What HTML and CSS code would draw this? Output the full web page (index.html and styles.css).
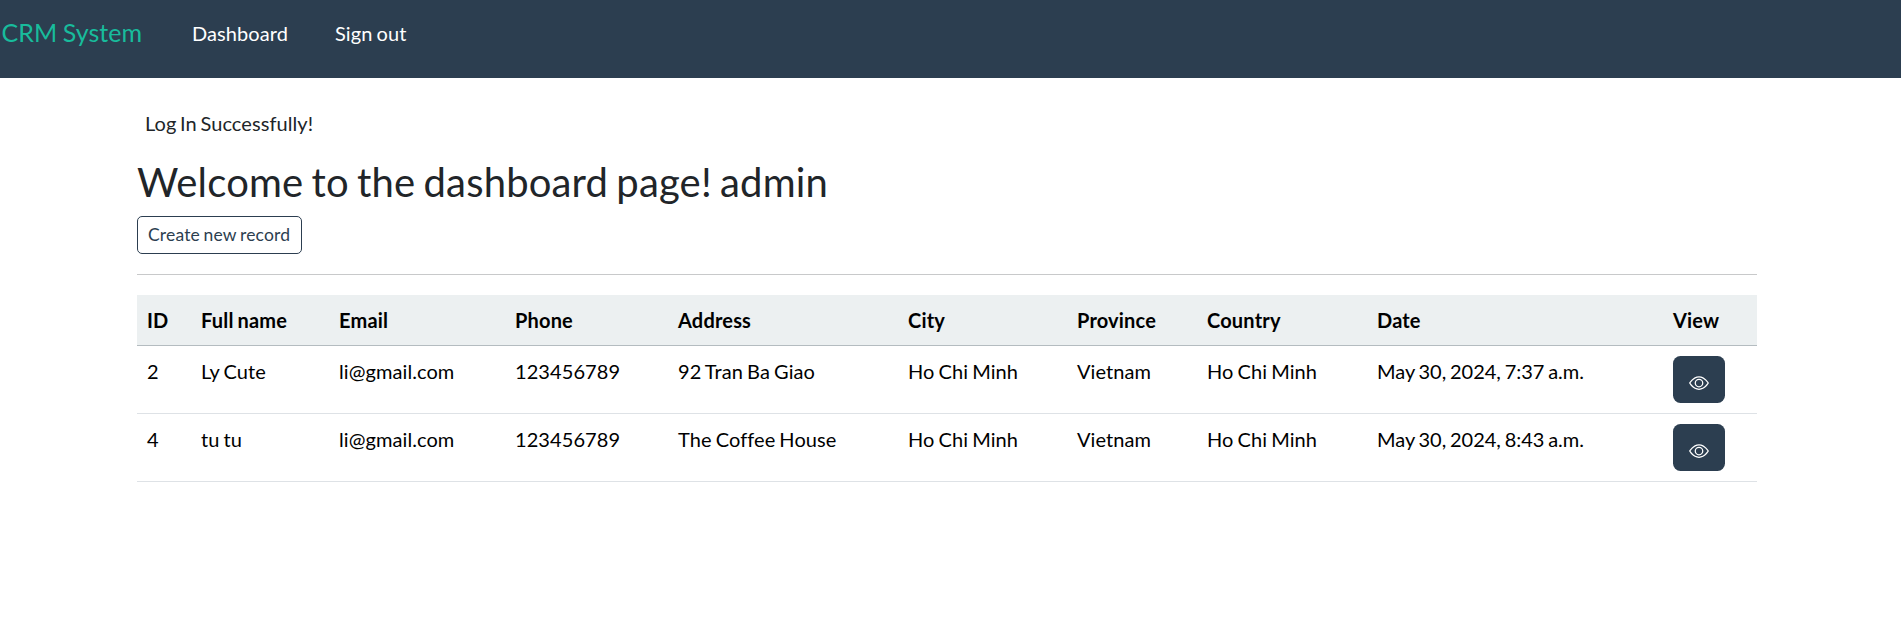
FILE: index.html
```html
<!DOCTYPE html>
<html lang="en">
<head>
<meta charset="utf-8">
<title>CRM System</title>
<link rel="stylesheet" href="styles.css">
</head>
<body>
<nav class="navbar">
  <a class="brand">CRM System</a>
  <a class="nav-link">Dashboard</a>
  <a class="nav-link">Sign out</a>
</nav>
<main class="container">
  <p class="message">Log In Successfully!</p>
  <h1 class="title">Welcome to the dashboard page! admin</h1>
  <a class="btn-outline">Create new record</a>
  <hr class="divider">
  <table class="table">
    <colgroup>
      <col class="c-id"><col class="c-name"><col class="c-email"><col class="c-phone"><col class="c-address"><col class="c-city"><col class="c-province"><col class="c-country"><col class="c-date"><col class="c-view">
    </colgroup>
    <thead>
      <tr><th>ID</th><th>Full name</th><th>Email</th><th>Phone</th><th>Address</th><th>City</th><th>Province</th><th>Country</th><th>Date</th><th>View</th></tr>
    </thead>
    <tbody>
      <tr><td>2</td><td>Ly Cute</td><td>li@gmail.com</td><td>123456789</td><td>92 Tran Ba Giao</td><td>Ho Chi Minh</td><td>Vietnam</td><td>Ho Chi Minh</td><td class="date">May 30, 2024, 7:37 a.m.</td>
        <td><a class="btn-view"><svg class="eye" viewBox="0 0 16 16" fill="currentColor"><path d="M16 8s-3-5.500-8-5.500S0 8 0 8s3 5.500 8 5.500S16 8 16 8M1.173 8a13 13 0 0 1 1.660-2.043C4.120 4.668 5.880 3.500 8 3.500s3.879 1.168 5.168 2.457A13 13 0 0 1 14.828 8q-.086.130-.195.288c-.335.480-.830 1.120-1.465 1.755C11.879 11.332 10.119 12.500 8 12.500s-3.879-1.168-5.168-2.457A13 13 0 0 1 1.172 8z"/><path d="M8 5.500a2.500 2.500 0 1 0 0 5 2.500 2.500 0 0 0 0-5M4.500 8a3.500 3.500 0 1 1 7 0 3.500 3.500 0 0 1-7 0"/></svg></a></td></tr>
      <tr><td>4</td><td>tu tu</td><td>li@gmail.com</td><td>123456789</td><td>The Coffee House</td><td>Ho Chi Minh</td><td>Vietnam</td><td>Ho Chi Minh</td><td class="date">May 30, 2024, 8:43 a.m.</td>
        <td><a class="btn-view"><svg class="eye" viewBox="0 0 16 16" fill="currentColor"><path d="M16 8s-3-5.500-8-5.500S0 8 0 8s3 5.500 8 5.500S16 8 16 8M1.173 8a13 13 0 0 1 1.660-2.043C4.120 4.668 5.880 3.500 8 3.500s3.879 1.168 5.168 2.457A13 13 0 0 1 14.828 8q-.086.130-.195.288c-.335.480-.830 1.120-1.465 1.755C11.879 11.332 10.119 12.500 8 12.500s-3.879-1.168-5.168-2.457A13 13 0 0 1 1.172 8z"/><path d="M8 5.500a2.500 2.500 0 1 0 0 5 2.500 2.500 0 0 0 0-5M4.500 8a3.500 3.500 0 1 1 7 0 3.500 3.500 0 0 1-7 0"/></svg></a></td></tr>
    </tbody>
  </table>
</main>
</body>
</html>
```
FILE: styles.css
```css
* { box-sizing: border-box; }
body {
  margin: 0;
  background: #fff;
  color: #212529;
  font-family: Lato, "Liberation Sans", sans-serif;
  font-size: 20px;
  line-height: 30px;
  letter-spacing: .08px;
  word-spacing: -1.1px;
}
.navbar {
  display: flex;
  align-items: flex-start;
  height: 78px;
  padding: 18px 0 0 1.5px;
  background: #2c3e50;
}
.brand {
  width: 190.5px;
  font-size: 25px;
  color: #18bc9c;
  margin-top: -1px;
}
.nav-link {
  color: #fff;
  margin-right: 47px;
}
.container {
  width: 1620px;
  margin-left: 137px;
}
.message {
  margin: 0;
  padding: 30px 8px 0;
  word-spacing: -1.6px;
}
.title {
  margin: 20px 0 10px;
  font-size: 40px;
  font-weight: 400;
  line-height: 48px;
  letter-spacing: .17px;
  word-spacing: -2.2px;
}
.btn-outline {
  display: block;
  width: 165px;
  height: 38px;
  border: 1px solid #2c3e50;
  border-radius: 5px;
  padding: 5px 10px;
  color: #2c3e50;
  font-size: 17.5px;
  line-height: 26px;
  letter-spacing: .18px;
  white-space: nowrap;
}
.divider {
  margin: 20px 0;
  border: 0;
  border-top: 1px solid #c8c9ca;
}
.table {
  width: 1620px;
  table-layout: fixed;
  border-collapse: separate;
  border-spacing: 0;
  color: #000;
}
.table th,
.table td {
  padding: 10px;
  text-align: left;
  vertical-align: top;
  white-space: nowrap;
}
.table th {
  height: 51px;
  background: #ecf0f1;
  border-bottom: 1px solid #b4bcc0;
  font-weight: 700;
  letter-spacing: .18px;
}
.table td {
  height: 68px;
  border-bottom: 1px solid #dee2e6;
}
.table .date {
  letter-spacing: 0;
  word-spacing: -1.4px;
}
.c-id { width: 54px; }
.c-name { width: 138px; }
.c-email { width: 176px; }
.c-phone { width: 163px; }
.c-address { width: 230px; }
.c-city { width: 169px; }
.c-province { width: 130px; }
.c-country { width: 170px; }
.c-date { width: 296px; }
.c-view { width: 94px; }
.btn-view {
  display: flex;
  justify-content: center;
  width: 52px;
  height: 47px;
  padding-top: 17px;
  border-radius: 7.5px;
  background: #2c3e50;
  color: #fff;
}
.eye {
  width: 20px;
  height: 20px;
}
```
